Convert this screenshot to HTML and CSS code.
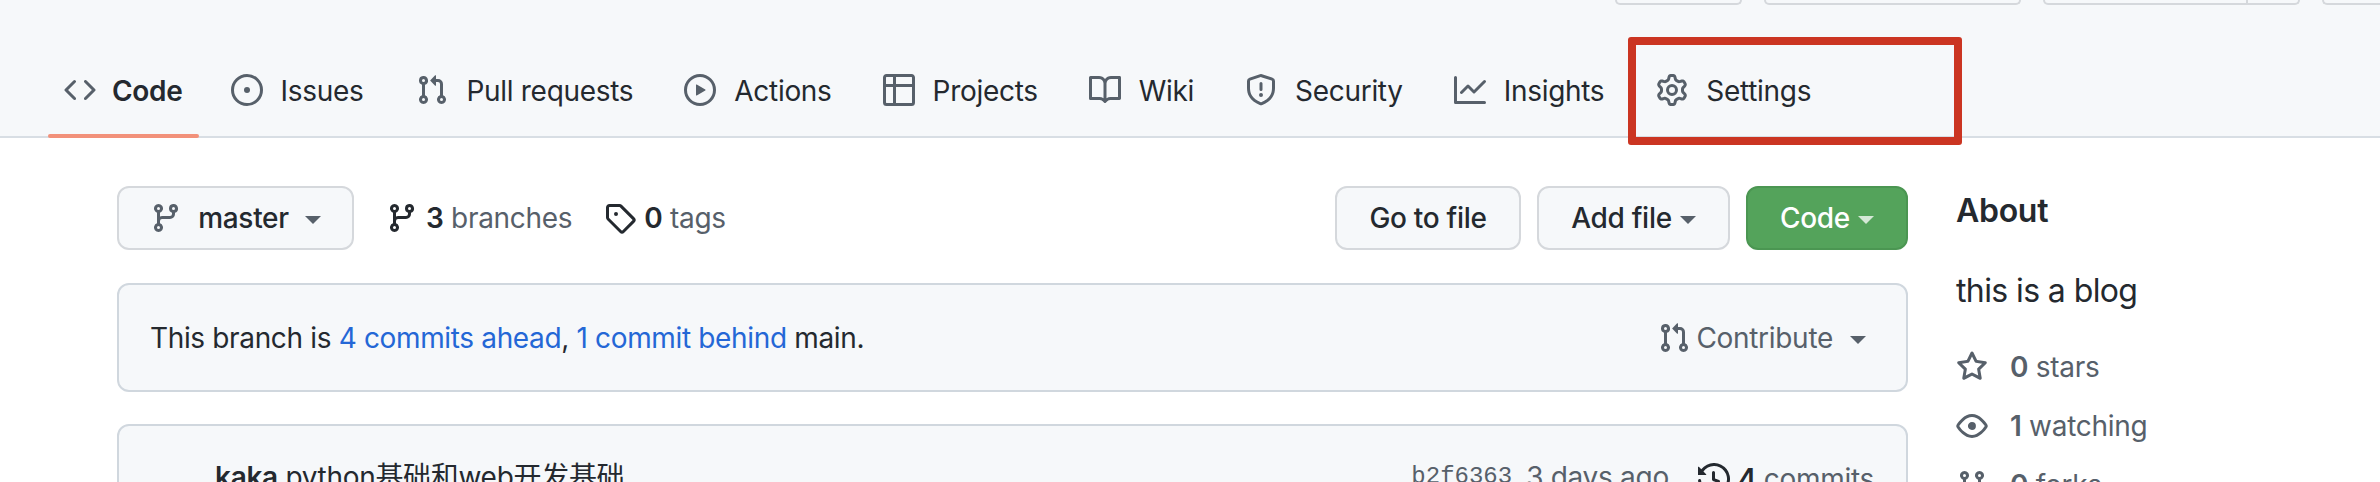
FILE: index.html
```html
<!DOCTYPE html>
<html lang="en">
<head>
<meta charset="utf-8">
<title>Repository</title>
<link rel="stylesheet" href="styles.css">
</head>
<body>
<svg class="defs" aria-hidden="true">
  <symbol id="i-code" viewBox="0 0 16 16"><path d="m11.28 3.22 4.25 4.25a.75.75 0 0 1 0 1.06l-4.25 4.25a.749.749 0 0 1-1.275-.326.749.749 0 0 1 .215-.734L13.94 8l-3.72-3.72a.749.749 0 0 1 .326-1.275.749.749 0 0 1 .734.215Zm-6.56 0a.751.751 0 0 1 1.042.018.751.751 0 0 1 .018 1.042L2.06 8l3.72 3.72a.749.749 0 0 1-.326 1.275.749.749 0 0 1-.734-.215L.47 8.53a.75.75 0 0 1 0-1.06Z"/></symbol>
  <symbol id="i-issue" viewBox="0 0 16 16"><path d="M8 9.5a1.5 1.5 0 1 0 0-3 1.5 1.5 0 0 0 0 3Z"/><path d="M8 0a8 8 0 1 1 0 16A8 8 0 0 1 8 0ZM1.5 8a6.5 6.5 0 1 0 13 0 6.5 6.5 0 0 0-13 0Z"/></symbol>
  <symbol id="i-pr" viewBox="0 0 16 16"><path d="M1.5 3.25a2.25 2.25 0 1 1 3 2.122v5.256a2.251 2.251 0 1 1-1.5 0V5.372A2.25 2.25 0 0 1 1.5 3.25Zm5.677-.177L9.573.677A.25.25 0 0 1 10 .854V2.5h1A2.5 2.5 0 0 1 13.5 5v5.628a2.251 2.251 0 1 1-1.5 0V5a1 1 0 0 0-1-1h-1v1.646a.25.25 0 0 1-.427.177L7.177 3.427a.25.25 0 0 1 0-.354ZM3.75 2.5a.75.75 0 1 0 0 1.5.75.75 0 0 0 0-1.5Zm0 9.5a.75.75 0 1 0 0 1.5.75.75 0 0 0 0-1.5Zm8.25.75a.75.75 0 1 0 1.5 0 .75.75 0 0 0-1.5 0Z"/></symbol>
  <symbol id="i-play" viewBox="0 0 16 16"><path d="M8 0a8 8 0 1 1 0 16A8 8 0 0 1 8 0ZM1.5 8a6.5 6.5 0 1 0 13 0 6.5 6.5 0 0 0-13 0Zm4.879-2.773 4.264 2.559a.25.25 0 0 1 0 .428l-4.264 2.559A.25.25 0 0 1 6 10.559V5.442a.25.25 0 0 1 .379-.215Z"/></symbol>
  <symbol id="i-table" viewBox="0 0 16 16"><path d="M0 1.75C0 .784.784 0 1.75 0h12.5C15.216 0 16 .784 16 1.75v12.5A1.75 1.75 0 0 1 14.25 16H1.75A1.75 1.75 0 0 1 0 14.25ZM6.5 6.5v8h7.75a.25.25 0 0 0 .25-.25V6.5Zm8-1.5V1.75a.25.25 0 0 0-.25-.25H6.5V5Zm-13 1.5v7.75c0 .138.112.25.25.25H5v-8ZM5 5V1.5H1.75a.25.25 0 0 0-.25.25V5Z"/></symbol>
  <symbol id="i-book" viewBox="0 0 16 16"><path d="M0 1.75A.75.75 0 0 1 .75 1h4.253c1.227 0 2.317.59 3 1.501A3.743 3.743 0 0 1 11.006 1h4.245a.75.75 0 0 1 .75.75v10.5a.75.75 0 0 1-.75.75h-4.507a2.25 2.25 0 0 0-1.591.659l-.622.621a.75.75 0 0 1-1.06 0l-.622-.621A2.25 2.25 0 0 0 5.258 13H.75a.75.75 0 0 1-.75-.75Zm7.251 10.324.004-5.073-.002-2.253A2.25 2.25 0 0 0 5.003 2.5H1.5v9h3.757a3.75 3.75 0 0 1 1.994.574ZM8.755 4.75l-.004 7.322a3.752 3.752 0 0 1 1.992-.572H14.5v-9h-3.495a2.25 2.25 0 0 0-2.25 2.25Z"/></symbol>
  <symbol id="i-shield" viewBox="0 0 16 16"><path d="M7.467.133a1.748 1.748 0 0 1 1.066 0l5.25 1.68A1.75 1.75 0 0 1 15 3.48V7c0 1.566-.32 3.182-1.303 4.682-.983 1.498-2.585 2.813-5.032 3.855a1.697 1.697 0 0 1-1.33 0c-2.447-1.042-4.049-2.357-5.032-3.855C1.32 10.182 1 8.566 1 7V3.48a1.75 1.75 0 0 1 1.217-1.667Zm.61 1.429a.25.25 0 0 0-.153 0l-5.25 1.68a.25.25 0 0 0-.174.238V7c0 1.358.275 2.666 1.057 3.86.784 1.194 2.121 2.34 4.366 3.297a.196.196 0 0 0 .154 0c2.245-.956 3.582-2.104 4.366-3.298C13.225 9.666 13.5 8.36 13.5 7V3.48a.251.251 0 0 0-.174-.237l-5.25-1.68ZM8.75 4.75v3a.75.75 0 0 1-1.5 0v-3a.75.75 0 0 1 1.5 0ZM9 10.5a1 1 0 1 1-2 0 1 1 0 0 1 2 0Z"/></symbol>
  <symbol id="i-graph" viewBox="0 0 16 16"><path d="M1.5 1.75V13.5h13.75a.75.75 0 0 1 0 1.5H.75a.75.75 0 0 1-.75-.75V1.75a.75.75 0 0 1 1.5 0Zm14.28 2.53-5.25 5.25a.75.75 0 0 1-1.06 0L7 7.06 4.28 9.78a.751.751 0 0 1-1.042-.018.751.751 0 0 1-.018-1.042l3.25-3.25a.75.75 0 0 1 1.06 0L10 7.94l4.72-4.72a.751.751 0 0 1 1.042.018.751.751 0 0 1 .018 1.042Z"/></symbol>
  <symbol id="i-gear" viewBox="0 0 16 16"><path d="M8 0a8.2 8.2 0 0 1 .701.031C9.444.095 9.99.645 10.16 1.29l.288 1.107c.018.066.079.158.212.224.231.114.454.243.668.386.123.082.233.09.299.071l1.103-.303c.644-.176 1.392.021 1.82.63.27.385.506.792.704 1.218.315.675.111 1.422-.364 1.891l-.814.806c-.049.048-.098.147-.088.294.016.257.016.515 0 .772-.01.147.038.246.088.294l.814.806c.475.469.679 1.216.364 1.891a7.977 7.977 0 0 1-.704 1.217c-.428.61-1.176.807-1.82.63l-1.102-.302c-.067-.019-.177-.011-.3.071a5.909 5.909 0 0 1-.668.386c-.133.066-.194.158-.211.224l-.29 1.106c-.168.646-.715 1.196-1.458 1.26a8.006 8.006 0 0 1-1.402 0c-.743-.064-1.289-.614-1.458-1.26l-.289-1.106c-.018-.066-.079-.158-.212-.224a5.738 5.738 0 0 1-.668-.386c-.123-.082-.233-.09-.299-.071l-1.103.303c-.644.176-1.392-.021-1.82-.63a8.12 8.12 0 0 1-.704-1.218c-.315-.675-.111-1.422.363-1.891l.815-.806c.05-.048.098-.147.088-.294a6.214 6.214 0 0 1 0-.772c.01-.147-.038-.246-.088-.294l-.815-.806C.635 6.045.431 5.298.746 4.623a7.92 7.92 0 0 1 .704-1.217c.428-.61 1.176-.807 1.82-.63l1.102.302c.067.019.177.011.3-.071.214-.143.437-.272.668-.386.133-.066.194-.158.211-.224l.29-1.106C6.009.645 6.556.095 7.299.03 7.53.01 7.764 0 8 0Zm-.571 1.525c-.036.003-.108.036-.137.146l-.289 1.105c-.147.561-.549.967-.998 1.189-.173.086-.34.183-.5.29-.417.278-.97.423-1.529.27l-1.103-.303c-.109-.03-.175.016-.195.045-.22.312-.412.644-.573.99-.014.031-.021.11.059.19l.815.806c.411.406.562.957.53 1.456a4.709 4.709 0 0 0 0 .582c.032.499-.119 1.05-.53 1.456l-.815.806c-.081.08-.073.159-.059.19.162.346.353.677.573.989.02.03.085.076.195.046l1.102-.303c.56-.153 1.113-.008 1.53.27.161.107.328.204.501.29.447.222.85.629.997 1.189l.289 1.105c.029.109.101.143.137.146a6.6 6.6 0 0 0 1.142 0c.036-.003.108-.036.137-.146l.289-1.105c.147-.561.549-.967.998-1.189.173-.086.34-.183.5-.29.417-.278.97-.423 1.529-.27l1.103.303c.109.029.175-.016.195-.045.22-.313.411-.644.573-.99.014-.031.021-.11-.059-.19l-.815-.806c-.411-.406-.562-.957-.53-1.456a4.709 4.709 0 0 0 0-.582c-.032-.499.119-1.05.53-1.456l.815-.806c.081-.08.073-.159.059-.19a6.464 6.464 0 0 0-.573-.989c-.02-.03-.085-.076-.195-.046l-1.102.303c-.56.153-1.113.008-1.53-.27a4.44 4.44 0 0 0-.501-.29c-.447-.222-.85-.629-.997-1.189l-.289-1.105c-.029-.11-.101-.143-.137-.146a6.6 6.6 0 0 0-1.142 0ZM11 8a3 3 0 1 1-6 0 3 3 0 0 1 6 0ZM9.5 8a1.5 1.5 0 1 0-3.001.001A1.5 1.5 0 0 0 9.5 8Z"/></symbol>
  <symbol id="i-branch" viewBox="0 0 16 16"><path d="M9.5 3.25a2.25 2.25 0 1 1 3 2.122V6A2.5 2.5 0 0 1 10 8.5H6a1 1 0 0 0-1 1v1.128a2.251 2.251 0 1 1-1.5 0V5.372a2.25 2.25 0 1 1 1.5 0v1.836A2.493 2.493 0 0 1 6 7h4a1 1 0 0 0 1-1v-.628A2.25 2.25 0 0 1 9.5 3.25Zm-6 0a.75.75 0 1 0 1.5 0 .75.75 0 0 0-1.5 0Zm8.25-.75a.75.75 0 1 0 0 1.5.75.75 0 0 0 0-1.5ZM4.25 12a.75.75 0 1 0 0 1.5.75.75 0 0 0 0-1.5Z"/></symbol>
  <symbol id="i-tag" viewBox="0 0 16 16"><path d="M1 7.775V2.75C1 1.784 1.784 1 2.75 1h5.025c.464 0 .91.184 1.238.513l6.25 6.25a1.75 1.75 0 0 1 0 2.474l-5.026 5.026a1.75 1.75 0 0 1-2.474 0l-6.25-6.25A1.752 1.752 0 0 1 1 7.775Zm1.5 0c0 .066.026.13.073.177l6.25 6.25a.25.25 0 0 0 .354 0l5.025-5.025a.25.25 0 0 0 0-.354l-6.25-6.25a.25.25 0 0 0-.177-.073H2.75a.25.25 0 0 0-.25.25ZM6 5a1 1 0 1 1 0 2 1 1 0 0 1 0-2Z"/></symbol>
  <symbol id="i-star" viewBox="0 0 16 16"><path d="M8 .25a.75.75 0 0 1 .673.418l1.882 3.815 4.21.612a.75.75 0 0 1 .416 1.279l-3.046 2.97.719 4.192a.751.751 0 0 1-1.088.791L8 12.347l-3.766 1.98a.75.75 0 0 1-1.088-.79l.72-4.194L.818 6.374a.75.75 0 0 1 .416-1.28l4.21-.611L7.327.668A.75.75 0 0 1 8 .25Zm0 2.445L6.615 5.5a.75.75 0 0 1-.564.41l-3.097.45 2.24 2.184a.75.75 0 0 1 .216.664l-.528 3.084 2.769-1.456a.75.75 0 0 1 .698 0l2.77 1.456-.53-3.084a.75.75 0 0 1 .216-.664l2.24-2.183-3.096-.45a.75.75 0 0 1-.564-.41L8 2.694Z"/></symbol>
  <symbol id="i-eye" viewBox="0 0 16 16"><path d="M8 2c1.981 0 3.671.992 4.933 2.078 1.27 1.091 2.187 2.345 2.637 3.023a1.62 1.62 0 0 1 0 1.798c-.45.678-1.367 1.932-2.637 3.023C11.67 13.008 9.981 14 8 14c-1.981 0-3.671-.992-4.933-2.078C1.797 10.83.88 9.576.43 8.898a1.62 1.62 0 0 1 0-1.798c.45-.677 1.367-1.931 2.637-3.022C4.33 2.992 6.019 2 8 2ZM1.679 7.932a.12.12 0 0 0 0 .136c.411.622 1.241 1.75 2.366 2.717C5.176 11.758 6.527 12.5 8 12.5c1.473 0 2.825-.742 3.955-1.715 1.124-.967 1.954-2.096 2.366-2.717a.12.12 0 0 0 0-.136c-.412-.621-1.242-1.75-2.366-2.717C10.824 4.242 9.473 3.5 8 3.5c-1.473 0-2.825.742-3.955 1.715-1.124.967-1.954 2.096-2.366 2.717ZM8 10a2 2 0 1 1-.001-3.999A2 2 0 0 1 8 10Z"/></symbol>
  <symbol id="i-fork" viewBox="0 0 16 16"><path d="M5 5.372v.878c0 .414.336.75.75.75h4.5a.75.75 0 0 0 .75-.75v-.878a2.25 2.25 0 1 1 1.5 0v.878a2.25 2.25 0 0 1-2.25 2.25h-1.5v2.128a2.251 2.251 0 1 1-1.5 0V8.5h-1.5A2.25 2.25 0 0 1 3.5 6.25v-.878a2.25 2.25 0 1 1 1.5 0ZM5 3.25a.75.75 0 1 0-1.5 0 .75.75 0 0 0 1.5 0Zm6.75.75a.75.75 0 1 0 0-1.5.75.75 0 0 0 0 1.5Zm-3 8.75a.75.75 0 1 0-1.5 0 .75.75 0 0 0 1.5 0Z"/></symbol>
  <symbol id="i-history" viewBox="0 0 16 16"><path d="m.427 1.927 1.215 1.215a8.002 8.002 0 1 1-1.6 5.685.75.75 0 1 1 1.493-.154 6.5 6.5 0 1 0 1.18-4.458l1.358 1.358A.25.25 0 0 1 3.896 6H.25A.25.25 0 0 1 0 5.75V2.104a.25.25 0 0 1 .427-.177ZM7.75 4a.75.75 0 0 1 .75.75v2.992l2.028.812a.75.75 0 0 1-.557 1.392l-2.5-1A.751.751 0 0 1 7 8.25v-3.5A.75.75 0 0 1 7.75 4Z"/></symbol>
</svg>

<header class="repo-head">
  <div class="top-actions">
    <div class="stub stub-a"></div>
    <div class="stub stub-b"></div>
    <div class="stub stub-c"><span class="stub-split"></span></div>
    <div class="stub stub-d"></div>
  </div>
  <nav class="tabs">
    <a class="tab tab-active"><svg class="icon"><use href="#i-code"/></svg><span>Code</span></a>
    <a class="tab tab-issues"><svg class="icon"><use href="#i-issue"/></svg><span>Issues</span></a>
    <a class="tab"><svg class="icon"><use href="#i-pr"/></svg><span>Pull requests</span></a>
    <a class="tab"><svg class="icon"><use href="#i-play"/></svg><span>Actions</span></a>
    <a class="tab"><svg class="icon"><use href="#i-table"/></svg><span>Projects</span></a>
    <a class="tab"><svg class="icon"><use href="#i-book"/></svg><span>Wiki</span></a>
    <a class="tab"><svg class="icon"><use href="#i-shield"/></svg><span>Security</span></a>
    <a class="tab"><svg class="icon"><use href="#i-graph"/></svg><span>Insights</span></a>
    <a class="tab tab-marked"><svg class="icon"><use href="#i-gear"/></svg><span>Settings</span><i class="marker"></i></a>
  </nav>
</header>

<main class="layout">
  <section class="content">
    <div class="file-bar">
      <div class="file-left">
        <button class="btn btn-branch"><svg class="icon"><use href="#i-branch"/></svg><span>master</span><i class="caret"></i></button>
        <a class="meta meta-branches"><svg class="icon icon-dark"><use href="#i-branch"/></svg><span class="meta-text"><b>3</b> branches</span></a>
        <a class="meta meta-tags"><svg class="icon icon-dark"><use href="#i-tag"/></svg><span class="meta-text"><b>0</b> tags</span></a>
      </div>
      <div class="file-right">
        <button class="btn btn-goto">Go to file</button>
        <button class="btn btn-add">Add file<i class="caret caret-near"></i></button>
        <button class="btn btn-green">Code<i class="caret caret-near caret-light"></i></button>
      </div>
    </div>

    <div class="banner">
      <p class="banner-text">This branch is <a>4 commits ahead</a>, <a>1 commit behind</a> main.</p>
      <div class="contribute"><svg class="icon"><use href="#i-pr"/></svg><span>Contribute</span><i class="caret"></i></div>
    </div>

    <div class="commit-box">
      <p class="commit-msg"><b>kaka</b> python基础和web开发基础</p>
      <div class="commit-meta">
        <code class="sha">b2f6363</code>
        <span class="ago">3 days ago</span>
        <span class="count"><svg class="icon icon-dark"><use href="#i-history"/></svg><span class="count-text"><b>4</b> commits</span></span>
      </div>
    </div>
  </section>

  <aside class="about">
    <h2 class="about-title">About</h2>
    <p class="about-desc">this is a blog</p>
    <ul class="stats">
      <li><svg class="icon"><use href="#i-star"/></svg><span><b>0</b> stars</span></li>
      <li><svg class="icon"><use href="#i-eye"/></svg><span><b>1</b> watching</span></li>
      <li><svg class="icon"><use href="#i-fork"/></svg><span><b>0</b> forks</span></li>
    </ul>
  </aside>
</main>
</body>
</html>
```
FILE: styles.css
```css
* { box-sizing: border-box; }
html, body { margin: 0; height: 482px; overflow: hidden; background: #fff; }
body {
  font-family: Inter, "Noto Sans CJK SC", sans-serif;
  font-size: 28px;
  line-height: 40px;
  color: #24292f;
  letter-spacing: -0.3px;
}
.defs { display: none; }
p, h2, ul { margin: 0; padding: 0; }
.icon { width: 32px; height: 32px; fill: #57606a; flex: none; }
.icon-dark { fill: #24292f; }

.repo-head { height: 138px; background: #f6f8fa; border-bottom: 2px solid #d8dee4; }
.top-actions { height: 5px; display: flex; padding-left: 1615px; }
.stub {
  height: 5px;
  border: 2px solid #d5d8dc;
  border-top: 0;
  border-radius: 0 0 12px 12px;
  position: relative;
}
.stub-a { width: 131px; margin-right: 22px; }
.stub-b { width: 266px; margin-right: 22px; }
.stub-c { width: 265px; margin-right: 22px; }
.stub-d { width: 60px; border-right: 0; border-radius: 0 0 0 12px; }
.stub-split { position: absolute; left: 201px; top: 0; width: 2px; height: 3px; background: #d5d8dc; }

.tabs { display: flex; gap: 19px; padding: 38px 0 0 48px; }
.tab {
  position: relative;
  display: flex;
  align-items: center;
  gap: 18px;
  height: 93px;
  padding: 0 16px;
  white-space: nowrap;
}
.tab span { margin-top: 2px; }
.tab-active { gap: 16px; font-weight: 600; margin-right: -3px; }
.tab-issues { margin-right: 2px; }
.tab-marked { margin-left: 1px; }
.tab-active::after {
  content: "";
  position: absolute;
  left: 0;
  right: 0;
  bottom: -2px;
  height: 4px;
  border-radius: 2px;
  background: #f2917a;
}
.marker {
  position: absolute;
  left: -12px;
  top: -6px;
  width: 334px;
  height: 108px;
  border: 8px solid #cb3522;
  border-radius: 3px;
}

.layout { display: flex; gap: 48px; padding: 48px 0 0 117px; }
.content { width: 1791px; flex: none; }

.file-bar { display: flex; justify-content: space-between; height: 64px; }
.file-left, .file-right { display: flex; align-items: center; }
.file-right { gap: 16px; }
.btn {
  display: flex;
  align-items: center;
  justify-content: center;
  height: 64px;
  padding: 0;
  font: inherit;
  font-weight: 500;
  letter-spacing: inherit;
  color: #24292f;
  background: #f6f8fa;
  border: 2px solid #d5d8dc;
  border-radius: 12px;
}
.btn-branch { width: 237px; gap: 16px; }
.btn-goto { width: 186px; }
.btn-add { width: 193px; }
.btn-green { width: 162px; color: #fff; background: #54a35b; border-color: #4b9652; }
.caret {
  display: inline-block;
  width: 0;
  height: 0;
  border-style: solid;
  border-width: 8px 8px 0;
  border-color: #57606a transparent transparent;
  margin-top: 4px;
}
.caret-near { margin-left: 8px; }
.caret-light { border-top-color: rgba(255, 255, 255, .75); }

.meta { display: flex; align-items: center; color: #57606a; white-space: pre; }
.meta b { color: #24292f; font-weight: 600; }
.meta-text { margin-left: 8px; }
.meta-branches { margin-left: 32px; }
.meta-tags { margin-left: 32px; }

.banner {
  display: flex;
  align-items: center;
  justify-content: space-between;
  height: 109px;
  margin-top: 33px;
  padding: 0 40px 0 31px;
  background: #f6f8fa;
  border: 2px solid #d0d7de;
  border-radius: 12px;
}
.banner-text { letter-spacing: -0.35px; }
.banner-text a { color: #2467d6; }
.contribute { display: flex; align-items: center; color: #57606a; }
.contribute .caret { margin-left: 17px; }
.contribute .icon { margin-right: 6px; }

.commit-box {
  display: flex;
  justify-content: space-between;
  height: 120px;
  margin-top: 32px;
  padding: 31px 32px 0 96px;
  background: #f6f8fa;
  border: 2px solid #d0d7de;
  border-radius: 12px;
}
.commit-msg b { font-weight: 600; }
.commit-meta { display: flex; align-items: flex-start; color: #57606a; }
.sha { font-family: "Liberation Mono", monospace; font-size: 24px; letter-spacing: 0; }
.ago { margin-left: 14px; }
.count { display: flex; align-items: center; height: 44px; margin-left: 29px; white-space: pre; color: #24292f; }
.count-text { margin-left: 8px; color: #57606a; }
.count b { font-weight: 600; color: #24292f; }

.about { width: 400px; padding-top: 1px; }
.about-title { font-size: 32px; line-height: 48px; font-weight: 600; }
.about-desc { font-size: 32px; line-height: 48px; margin-top: 32px; letter-spacing: -0.6px; }
.stats { list-style: none; margin-top: 22px; color: #57606a; }
.stats li { display: flex; align-items: center; height: 59px; white-space: pre; }
.stats .icon { margin-right: 22px; }
.stats b { font-weight: 600; }
```
